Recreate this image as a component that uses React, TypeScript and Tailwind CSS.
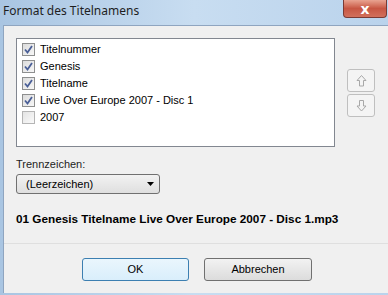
import { useState } from 'react';

const items = [
  { label: 'Titelnummer', checked: true },
  { label: 'Genesis', checked: true },
  { label: 'Titelname', checked: true },
  { label: 'Live Over Europe 2007 - Disc 1', checked: true },
  { label: '2007', checked: false },
];

function CheckBox({ checked }: { checked: boolean }) {
  return (
    <div
      className={`w-[13px] h-[13px] border flex items-center justify-center ${
        checked
          ? 'border-[#8e8f8f] bg-gradient-to-br from-[#dcdcdc] to-[#f7f7f7]'
          : 'border-[#b5b5b5] bg-gradient-to-br from-[#e4e4e4] to-[#fafafa]'
      }`}
    >
      {checked && (
        <svg width="9" height="9" viewBox="0 0 9 9">
          <path d="M1 4.5 L3.5 7.5 L8 1" fill="none" stroke="#4a5f97" strokeWidth="1.8" />
        </svg>
      )}
    </div>
  );
}

function ArrowButton({ down }: { down?: boolean }) {
  return (
    <div className="w-[28px] h-[23px] rounded-[3px] border border-[#bfbfbf] bg-[#f4f4f4] flex items-center justify-center">
      <svg width="11" height="12" viewBox="0 0 11 12">
        <path
          d={down ? 'M3.5 0.5 H7.5 V6 H10 L5.5 11 L1 6 H3.5 Z' : 'M5.5 0.5 L10 5.5 H7.5 V11 H3.5 V5.5 H1 Z'}
          fill="none"
          stroke="#a8a8a8"
        />
      </svg>
    </div>
  );
}

export default function App() {
  const [list] = useState(items);

  return (
    <div
      className="relative w-[388px] h-[295px] overflow-hidden flex flex-col bg-gradient-to-r from-[#a9c5e2] via-[#c8ddf1] to-[#bad3ec] text-[11px] text-black"
      style={{ fontFamily: '"Liberation Sans", Arial, sans-serif' }}
    >
      {/* Title bar */}
      <div
        className="h-[25px] flex items-center pl-[3px] pb-[3px] text-[12px] text-[#1e1e1e]"
        style={{ fontFamily: '"Noto Sans", sans-serif' }}
      >
        Format des Titelnamens
      </div>
      <div className="absolute top-0 right-[1px] w-[44px] h-[18px] rounded-b-[4px] border border-t-0 border-[#7a3a34] bg-gradient-to-b from-[#e8a391] via-[#c75643] to-[#d2705c] flex items-center justify-center">
        <span className="text-white font-bold text-[14px] leading-none" style={{ fontFamily: '"DejaVu Sans", sans-serif' }}>
          x
        </span>
      </div>

      {/* Client area */}
      <div className="ml-[3px] mb-[2px] flex-1 bg-[#f0f0f0] border-l border-t border-[#8fa5c0] flex flex-col">
        <div className="pl-[12px] pt-[12px] flex flex-col">
          <div className="flex">
            <div className="w-[319px] h-[109px] border border-[#828790] bg-white pt-[2px] pl-[5px] flex flex-col">
              {list.map((item) => (
                <div key={item.label} className="h-[17px] flex items-center gap-[5px]">
                  <CheckBox checked={item.checked} />
                  <span className="leading-[17px]">{item.label}</span>
                </div>
              ))}
            </div>
            <div className="ml-[12px] mt-[31px] flex flex-col gap-[2px]">
              <ArrowButton />
              <ArrowButton down />
            </div>
          </div>

          <div className="mt-[9px] leading-[17px] text-[#1e1e1e]">Trennzeichen:</div>
          <div className="mt-[1px] w-[144px] h-[20px] rounded-[3px] border border-[#707070] bg-gradient-to-b from-[#f2f2f2] to-[#dfdfdf] flex items-center justify-between pl-[9px] pr-[5px]">
            <span>(Leerzeichen)</span>
            <svg width="7" height="4" viewBox="0 0 7 4">
              <path d="M0 0 H7 L3.5 4 Z" fill="#000" />
            </svg>
          </div>

          <div className="mt-[16px] leading-[18px] font-bold text-[11.75px] whitespace-nowrap">
            01 Genesis Titelname Live Over Europe 2007 - Disc 1.mp3
          </div>
        </div>

        <div className="mt-[15px] flex-1 border-t border-[#dfdfdf] bg-[#f0f0f0] flex gap-[15px] pt-[14px] pl-[78px]">
          <div className="w-[107px] h-[23px] rounded-[3px] border border-[#3c7fb1] bg-gradient-to-b from-[#eaf6fd] to-[#d9eefb] flex items-center justify-center">
            OK
          </div>
          <div className="w-[108px] h-[23px] rounded-[3px] border border-[#707070] bg-gradient-to-b from-[#f2f2f2] to-[#dcdcdc] flex items-center justify-center">
            Abbrechen
          </div>
        </div>
      </div>
    </div>
  );
}
